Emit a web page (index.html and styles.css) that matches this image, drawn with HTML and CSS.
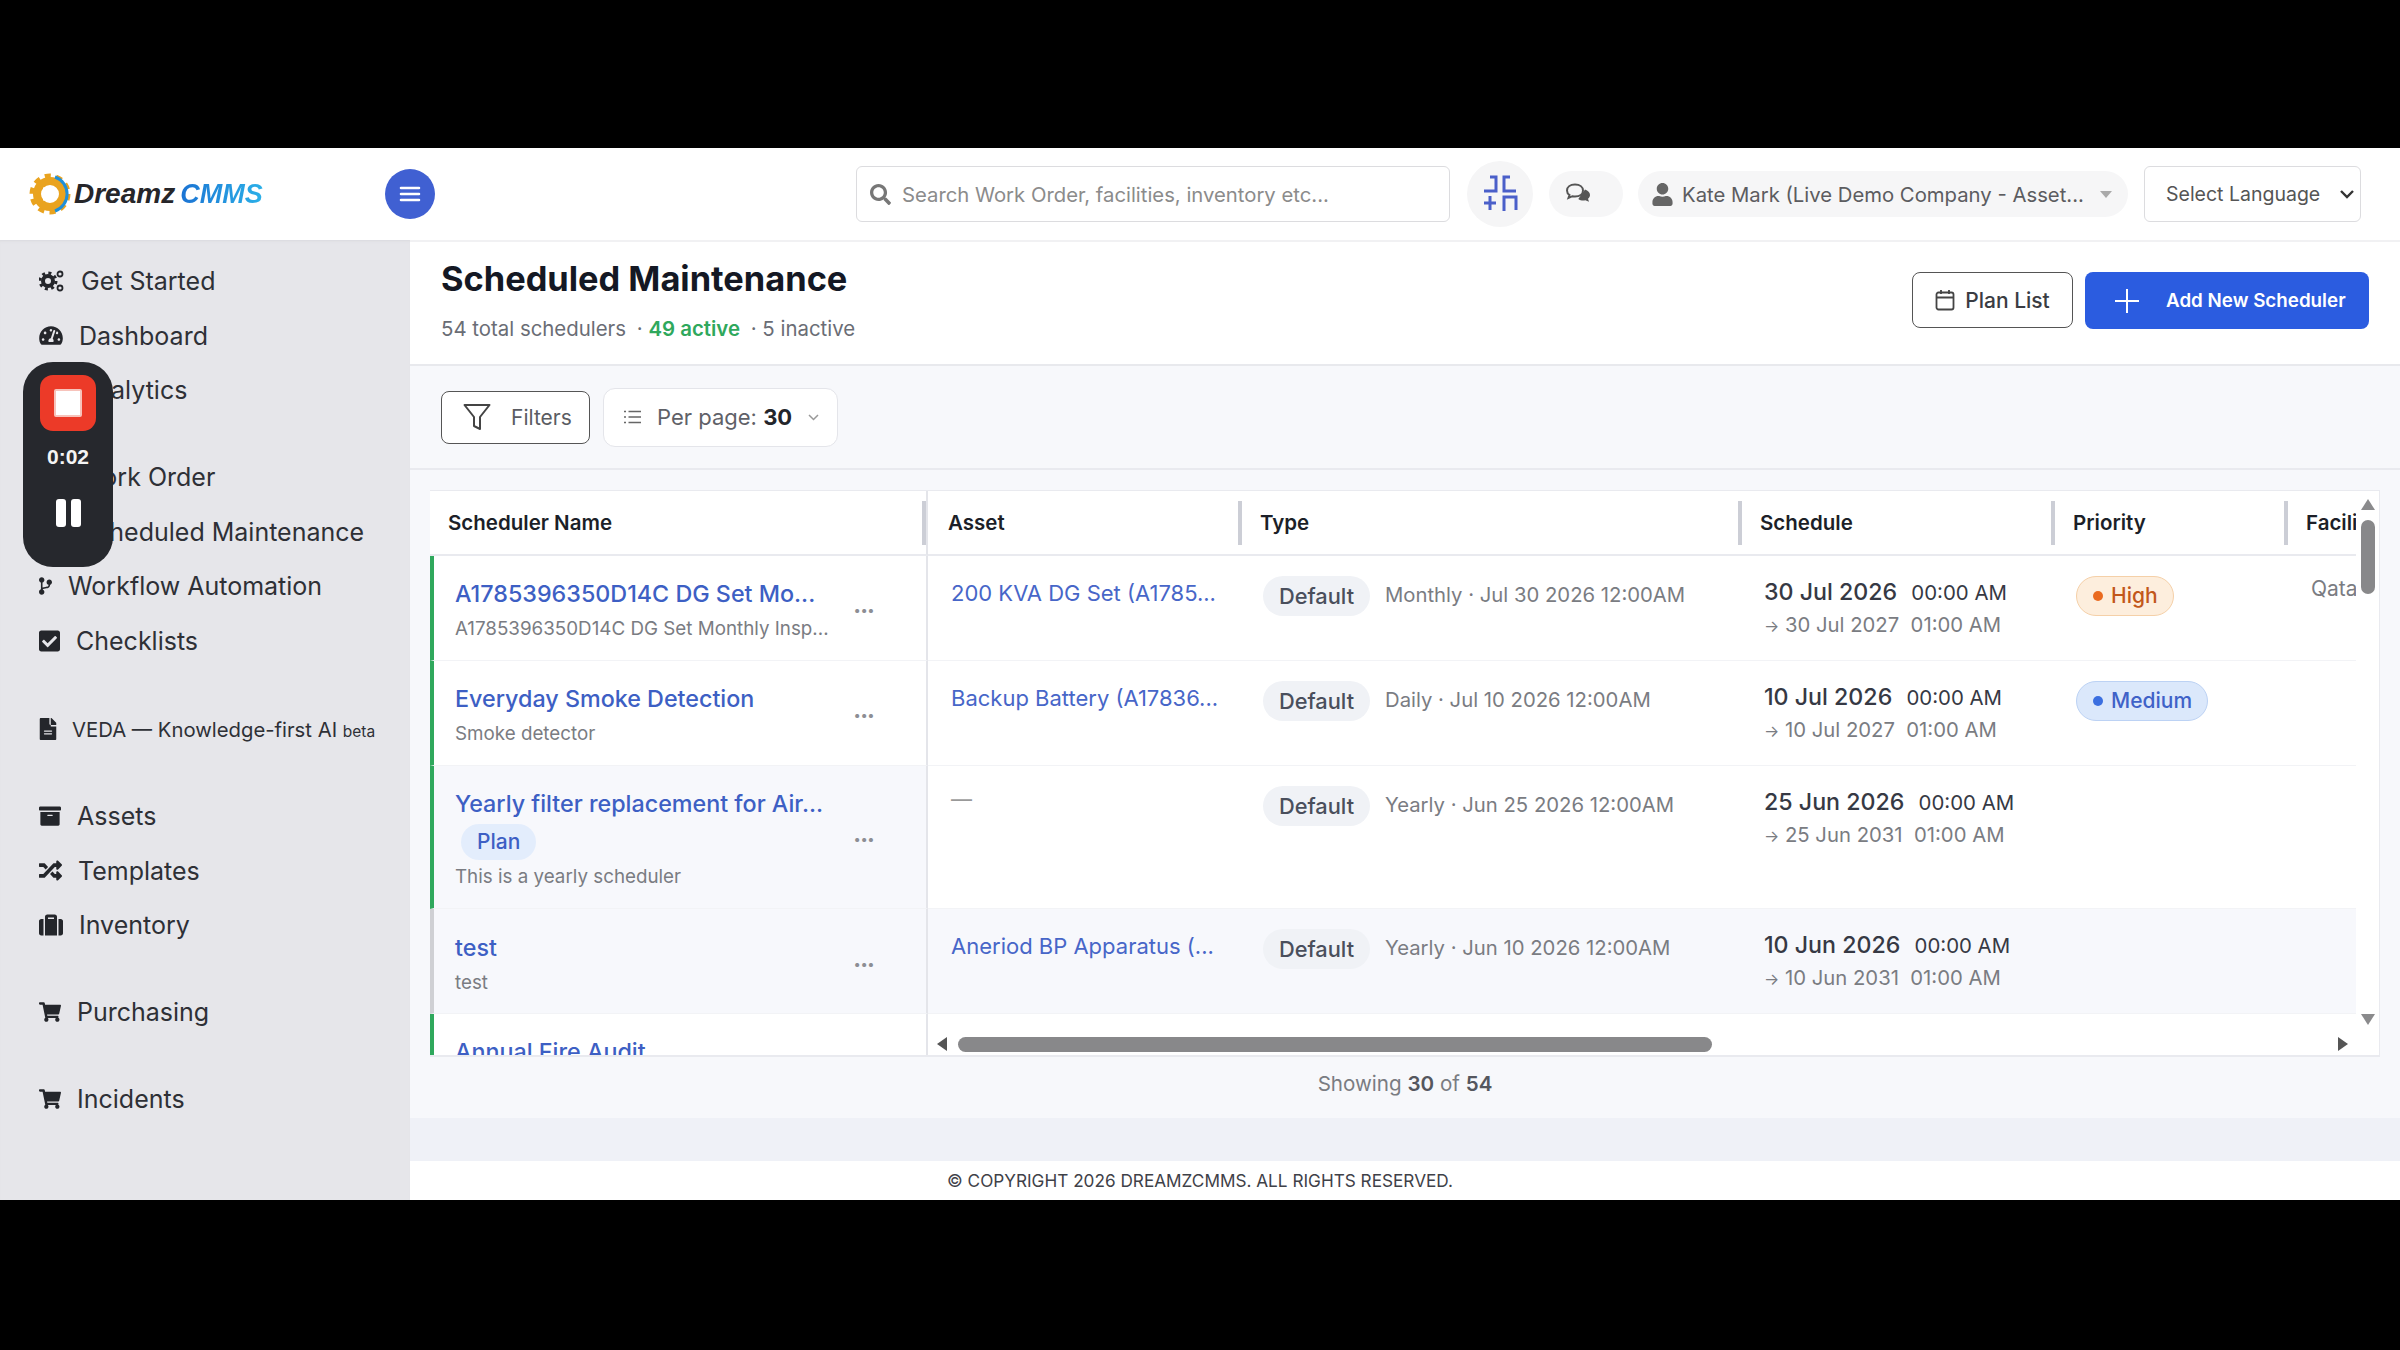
FILE: index.html
```html
<!DOCTYPE html>
<html lang="en">
<head>
    <meta charset="UTF-8">
    <meta name="viewport" content="width=device-width, initial-scale=1.0">
    <title>Scheduled Maintenance - DreamzCMMS</title>
    <link rel="stylesheet" href="styles.css">
</head>
<body>
<div class="app">
    <header class="topbar">
        <a class="logo">
            <svg class="logo-gear" viewBox="0 0 44 44">
                <circle cx="22" cy="22" r="18" fill="none" stroke="#e9a31f" stroke-width="5" stroke-dasharray="6 5.3"/>
                <circle cx="22" cy="22" r="13" fill="none" stroke="#e9a31f" stroke-width="8"/>
                <path d="M27 5 A18 18 0 0 1 27 39" fill="none" stroke="#1f8fd8" stroke-width="3"/>
                <path d="M15 17 H23 A5 5 0 0 1 23 27 H15" fill="none" stroke="#fff" stroke-width="3"/>
            </svg>
            <span class="logo-dark">Dreamz</span>
            <span class="logo-blue">CMMS</span>
        </a>
        <button class="menu-btn">
            <svg viewBox="0 0 24 24" width="24" height="24"><path d="M3 6h18M3 12h18M3 18h18" stroke="#fff" stroke-width="2.6" stroke-linecap="round"/></svg>
        </button>
        <div class="search">
            <svg class="search-icon" viewBox="0 0 512 512"><path d="M505 442.7L405.3 343c-4.5-4.5-10.6-7-17-7H372c27.6-35.3 44-79.7 44-128C416 93.1 322.9 0 208 0S0 93.1 0 208s93.1 208 208 208c48.3 0 92.7-16.4 128-44v16.3c0 6.4 2.5 12.5 7 17l99.7 99.7c9.4 9.4 24.6 9.4 33.9 0l28.3-28.3c9.4-9.4 9.4-24.6.1-34zM208 336c-70.7 0-128-57.2-128-128 0-70.7 57.2-128 128-128 70.7 0 128 57.2 128 128 0 70.7-57.2 128-128 128z"/></svg>
            <input type="text" placeholder="Search Work Order, facilities, inventory etc...">
        </div>
        <button class="compress-btn">
            <svg viewBox="0 0 36 38" width="36" height="38" fill="none" stroke="#4a5fc9" stroke-width="3"><path d="M2 16H14V2H8M34 16H22V2H28M2 28H14M8 21V35M22 36V22H34V35"/></svg>
        </button>
        <button class="chat-btn">
            <svg viewBox="0 0 28 20" width="28" height="20" fill="none" stroke="#555" stroke-width="2"><path d="M10 1.5C5 1.5 2 4 2 7.5c0 2 1 3.5 2.5 4.5L3.5 15l4-1.8c1 .2 1.700.3 2.500.3 5 0 8-2.500 8-6S15 1.500 10 1.500z"/><path d="M20 6.500c3 1 5 3 5 5.500 0 1.500-.7 2.800-2 3.800l1 3-3.700-1.500c-2.300.5-5 .2-7-1.300" fill="#555" stroke="none"/></svg>
        </button>
        <div class="user-pill">
            <svg class="user-icon" viewBox="0 0 448 512"><path d="M224 256c70.700 0 128-57.300 128-128S294.700 0 224 0 96 57.300 96 128s57.300 128 128 128zm89.600 32h-16.700c-22.200 10.200-46.900 16-72.900 16s-50.600-5.800-72.900-16h-16.700C60.200 288 0 348.200 0 422.400V464c0 26.500 21.500 48 48 48h352c26.500 0 48-21.500 48-48v-41.600c0-74.200-60.200-134.400-134.400-134.400z"/></svg>
            <span>Kate Mark (Live Demo Company - Asset...</span>
            <i class="caret"></i>
        </div>
        <div class="lang">
            <span>Select Language</span>
            <svg width="14" height="9" viewBox="0 0 14 9" fill="none" stroke="#333" stroke-width="2.4"><path d="M1 1l6 6 6-6"/></svg>
        </div>
    </header>

    <div class="layout">
        <nav class="sidebar">
            <div class="nav-group">
                <a class="nav-item">
                    <svg width="26" height="24" viewBox="0 0 26 24" fill="none" stroke="#24262b"><circle cx="9" cy="12" r="5" stroke-width="4"/><circle cx="9" cy="12" r="8" stroke-width="3" stroke-dasharray="3 3.300"/><circle cx="21" cy="5" r="2.500" stroke-width="1.800"/><circle cx="21" cy="19" r="2.500" stroke-width="1.800"/></svg>
                    Get Started
                </a>
                <a class="nav-item">
                    <svg width="24" height="21" viewBox="0 0 576 512" fill="#24262b"><path d="M288 32C128.940 32 0 160.940 0 320c0 52.800 14.250 102.260 39.060 144.800 5.610 9.620 16.300 15.200 27.440 15.200h443c11.140 0 21.830-5.580 27.440-15.200C561.750 422.260 576 372.800 576 320c0-159.060-128.940-288-288-288zm0 64c14.710 0 26.580 10.130 30.320 23.650-1.110 2.260-2.640 4.230-3.450 6.670l-9.220 27.670c-5.130 3.490-10.970 6.010-17.640 6.010-17.670 0-32-14.330-32-32S270.330 96 288 96zM96 384c-17.670 0-32-14.330-32-32s14.330-32 32-32 32 14.330 32 32-14.330 32-32 32zm48-160c-17.670 0-32-14.330-32-32s14.330-32 32-32 32 14.330 32 32-14.330 32-32 32zm246.770-72.410l-61.330 184C343.130 347.330 352 364.540 352 384c0 11.720-3.380 22.550-8.880 32H232.880c-5.500-9.450-8.880-20.280-8.880-32 0-33.940 26.500-61.430 59.900-63.590l61.340-184.010c4.170-12.560 17.730-19.450 30.360-15.170 12.570 4.190 19.350 17.790 15.170 30.360zm14.660 57.200l15.520-46.550c3.470-1.290 7.130-2.230 11.050-2.230 17.670 0 32 14.330 32 32s-14.330 32-32 32c-11.380-.01-20.890-6.280-26.570-15.220zM480 384c-17.670 0-32-14.330-32-32s14.330-32 32-32 32 14.330 32 32-14.330 32-32 32z"/></svg>
                    Dashboard
                </a>
                <a class="nav-item">
                    <svg width="24" height="21" viewBox="0 0 24 21" fill="#24262b"><path d="M2 12h4v8H2zM10 2h4v18h-4zM18 7h4v13h-4z"/></svg>
                    Analytics
                </a>
            </div>
            <div class="nav-group">
                <a class="nav-item">
                    <svg width="24" height="21" viewBox="0 0 24 21" fill="#24262b"><path d="M3 2h18v17H3z"/></svg>
                    Work Order
                </a>
                <a class="nav-item">
                    <svg width="24" height="21" viewBox="0 0 24 21" fill="#24262b"><path d="M3 2h18v17H3z"/></svg>
                    Scheduled Maintenance
                </a>
                <a class="nav-item">
                    <svg width="13" height="20" viewBox="0 0 384 512" fill="#24262b"><path d="M384 144c0-44.200-35.800-80-80-80s-80 35.800-80 80c0 36.400 24.300 67.100 57.500 76.800-.6 16.100-4.200 28.500-11 36.900-15.400 19.200-49.300 22.400-85.200 25.700-28.200 2.600-57.400 5.400-81.300 16.900v-144c32.500-10.200 56-40.500 56-76.300 0-44.200-35.800-80-80-80S0 35.800 0 80c0 35.800 23.500 66.100 56 76.300v199.300C23.500 365.900 0 396.200 0 432c0 44.200 35.800 80 80 80s80-35.800 80-80c0-34-21.200-63.100-51.200-74.600 3.100-5.200 7.800-9.800 14.900-13.400 16.200-8.200 40.400-10.400 66.100-12.800 42.200-3.900 90-8.400 118.200-43.400 14-17.400 21.100-39.800 21.600-67.900 31.600-10.800 54.400-40.700 54.400-75.900z"/></svg>
                    Workflow Automation
                </a>
                <a class="nav-item">
                    <svg width="21" height="24" viewBox="0 0 448 512" fill="#24262b"><path d="M400 480H48c-26.510 0-48-21.490-48-48V80c0-26.510 21.490-48 48-48h352c26.510 0 48 21.490 48 48v352c0 26.510-21.490 48-48 48zm-204.686-98.059l184-184c6.248-6.248 6.248-16.379 0-22.627l-22.627-22.627c-6.248-6.248-16.379-6.249-22.628 0L184 302.745l-69.059-69.059c-6.248-6.248-16.379-6.248-22.628 0L69.686 256.314c-6.248 6.248-6.248 16.379 0 22.627l104 104c6.249 6.250 16.379 6.250 22.628.001z"/></svg>
                    Checklists
                </a>
            </div>
            <div class="nav-group nav-veda">
                <a class="nav-item nav-small">
                    <svg width="18" height="22" viewBox="0 0 384 512" fill="#24262b"><path d="M224 136V0H24C10.700 0 0 10.700 0 24v464c0 13.300 10.700 24 24 24h336c13.300 0 24-10.700 24-24V160H248c-13.200 0-24-10.800-24-24zm64 236c0 6.600-5.400 12-12 12H108c-6.600 0-12-5.400-12-12v-8c0-6.600 5.400-12 12-12h168c6.600 0 12 5.400 12 12v8zm0-64c0 6.600-5.400 12-12 12H108c-6.600 0-12-5.400-12-12v-8c0-6.600 5.400-12 12-12h168c6.600 0 12 5.400 12 12v8zm96-114.100v6.100H256V0h6.100c6.400 0 12.500 2.500 17 7l97.900 98c4.500 4.500 7 10.600 7 16.900z"/></svg>
                    <span>VEDA — Knowledge-first AI <small class="beta">beta</small></span>
                </a>
            </div>
            <div class="nav-group">
                <a class="nav-item">
                    <svg width="22" height="22" viewBox="0 0 512 512" fill="#24262b"><path d="M32 448c0 17.700 14.300 32 32 32h384c17.700 0 32-14.300 32-32V160H32v288zm160-212c0-6.600 5.400-12 12-12h104c6.600 0 12 5.400 12 12v8c0 6.600-5.400 12-12 12H204c-6.600 0-12-5.400-12-12v-8zM480 32H32C14.300 32 0 46.300 0 64v48c0 8.800 7.200 16 16 16h480c8.800 0 16-7.200 16-16V64c0-17.700-14.300-32-32-32z"/></svg>
                    Assets
                </a>
                <a class="nav-item">
                    <svg width="23" height="23" viewBox="0 0 512 512" fill="#24262b"><path d="M504.971 359.029c9.373 9.373 9.373 24.569 0 33.941l-80 79.984c-15.010 15.010-40.971 4.490-40.971-16.971V416h-58.785a12.004 12.004 0 0 1-8.773-3.812l-70.556-75.596 53.333-57.143L352 336h32v-39.981c0-21.438 25.943-31.998 40.971-16.971l80 79.981zM12 176h84l52.781 56.551 53.333-57.143-70.556-75.596A11.999 11.999 0 0 0 122.785 96H12c-6.627 0-12 5.373-12 12v56c0 6.627 5.373 12 12 12zm372 0v39.984c0 21.460 25.961 31.980 40.971 16.971l80-79.984c9.373-9.373 9.373-24.569 0-33.941l-80-79.981C409.943 24.021 384 34.582 384 56.019V96h-58.785a12.004 12.004 0 0 0-8.773 3.812L96 336H12c-6.627 0-12 5.373-12 12v56c0 6.627 5.373 12 12 12h110.785c3.326 0 6.503-1.381 8.773-3.812L352 176h32z"/></svg>
                    Templates
                </a>
                <a class="nav-item">
                    <svg width="24" height="24" viewBox="0 0 512 512" fill="#24262b"><path d="M128 480h256V80c0-26.500-21.500-48-48-48H176c-26.500 0-48 21.500-48 48v400zm64-384h128v32H192V96zm320 80v256c0 26.500-21.500 48-48 48h-48V128h48c26.500 0 48 21.500 48 48zM96 480H48c-26.500 0-48-21.500-48-48V176c0-26.500 21.500-48 48-48h48v352z"/></svg>
                    Inventory
                </a>
            </div>
            <div class="nav-group">
                <a class="nav-item">
                    <svg width="22" height="20" viewBox="0 0 576 512" fill="#24262b"><path d="M528.120 301.319l47.273-208C578.806 78.301 567.391 64 551.990 64H159.208l-9.166-44.810C147.758 8.021 137.930 0 126.529 0H24C10.745 0 0 10.745 0 24v16c0 13.255 10.745 24 24 24h69.883l70.248 343.435C147.325 417.100 136 435.222 136 456c0 30.928 25.072 56 56 56s56-25.072 56-56c0-15.674-6.447-29.835-16.824-40h209.647C430.447 426.165 424 440.326 424 456c0 30.928 25.072 56 56 56s56-25.072 56-56c0-22.172-12.888-41.332-31.579-50.405l5.517-24.276c3.413-15.018-8.002-29.319-23.403-29.319H218.117l-6.545-32h293.145c11.206 0 20.920-7.754 23.403-18.681z"/></svg>
                    Purchasing
                </a>
            </div>
            <div class="nav-group">
                <a class="nav-item">
                    <svg width="22" height="20" viewBox="0 0 576 512" fill="#24262b"><path d="M528.120 301.319l47.273-208C578.806 78.301 567.391 64 551.990 64H159.208l-9.166-44.810C147.758 8.021 137.930 0 126.529 0H24C10.745 0 0 10.745 0 24v16c0 13.255 10.745 24 24 24h69.883l70.248 343.435C147.325 417.100 136 435.222 136 456c0 30.928 25.072 56 56 56s56-25.072 56-56c0-15.674-6.447-29.835-16.824-40h209.647C430.447 426.165 424 440.326 424 456c0 30.928 25.072 56 56 56s56-25.072 56-56c0-22.172-12.888-41.332-31.579-50.405l5.517-24.276c3.413-15.018-8.002-29.319-23.403-29.319H218.117l-6.545-32h293.145c11.206 0 20.920-7.754 23.403-18.681z"/></svg>
                    Incidents
                </a>
            </div>
        </nav>

        <main class="main">
            <section class="page-head">
                <div>
                    <h1>Scheduled Maintenance</h1>
                    <p class="summary">54 total schedulers <span class="sep">·</span> <b>49 active</b> <span class="sep">·</span> 5 inactive</p>
                </div>
                <div class="head-actions">
                    <button class="btn-outline">
                        <svg width="20" height="22" viewBox="0 0 20 22" fill="none" stroke="#444" stroke-width="1.800"><rect x="1.500" y="3.500" width="17" height="17" rx="2"/><path d="M1.500 8.500h17M6 1v4M14 1v4"/></svg>
                        Plan List
                    </button>
                    <button class="btn-primary">
                        <svg width="26" height="26" viewBox="0 0 26 26" stroke="#fff" stroke-width="2"><path d="M13 1v24M1 13h24"/></svg>
                        Add New Scheduler
                    </button>
                </div>
            </section>

            <section class="toolbar">
                <button class="btn-filter">
                    <svg width="28" height="28" viewBox="0 0 28 28" fill="none" stroke="#444" stroke-width="2" stroke-linejoin="round"><path d="M1.500 2h25L17 14v12l-6-3v-9z"/></svg>
                    Filters
                </button>
                <div class="per-page">
                    <svg width="17" height="14" viewBox="0 0 17 14" stroke="#666" stroke-width="1.600"><path d="M4.500 1.500H17M4.500 7H17M4.500 12.500H17M0 1.500h2M0 7h2M0 12.500h2"/></svg>
                    <span>Per page: <b>30</b></span>
                    <svg width="11" height="7" viewBox="0 0 11 7" fill="none" stroke="#999" stroke-width="1.500"><path d="M1 1l4.500 4.500L10 1"/></svg>
                </div>
            </section>

            <section class="content">
                <div class="card">
                    <table class="sched-table">
                        <colgroup>
                            <col class="col-name"><col class="col-asset"><col class="col-type">
                            <col class="col-schedule"><col class="col-priority"><col class="col-facility">
                        </colgroup>
                        <thead>
                            <tr>
                                <th>Scheduler Name</th>
                                <th>Asset</th>
                                <th>Type</th>
                                <th>Schedule</th>
                                <th>Priority</th>
                                <th>Facili</th>
                            </tr>
                        </thead>
                        <tbody>
                            <tr>
                                <td class="name-cell">
                                    <div class="name-wrap">
                                        <div>
                                            <a class="sched-title">A1785396350D14C DG Set Mo...</a>
                                            <div class="sched-sub">A1785396350D14C DG Set Monthly Insp...</div>
                                        </div>
                                        <span class="dots">•••</span>
                                    </div>
                                </td>
                                <td class="asset-cell"><a class="asset-link">200 KVA DG Set (A1785...</a></td>
                                <td class="type-cell"><div class="type-wrap"><span class="pill-default">Default</span><span class="freq">Monthly · Jul 30 2026 12:00AM</span></div></td>
                                <td class="date-cell"><div class="date-main">30 Jul 2026 <span>00:00 AM</span></div><div class="date-end"><small>→</small> 30 Jul 2027&nbsp; 01:00 AM</div></td>
                                <td class="prio-cell"><span class="prio prio-high"><i></i>High</span></td>
                                <td class="facility">Qatar</td>
                            </tr>
                            <tr>
                                <td class="name-cell">
                                    <div class="name-wrap">
                                        <div>
                                            <a class="sched-title">Everyday Smoke Detection</a>
                                            <div class="sched-sub">Smoke detector</div>
                                        </div>
                                        <span class="dots">•••</span>
                                    </div>
                                </td>
                                <td class="asset-cell"><a class="asset-link">Backup Battery (A17836...</a></td>
                                <td class="type-cell"><div class="type-wrap"><span class="pill-default">Default</span><span class="freq">Daily · Jul 10 2026 12:00AM</span></div></td>
                                <td class="date-cell"><div class="date-main">10 Jul 2026 <span>00:00 AM</span></div><div class="date-end"><small>→</small> 10 Jul 2027&nbsp; 01:00 AM</div></td>
                                <td class="prio-cell"><span class="prio prio-medium"><i></i>Medium</span></td>
                                <td></td>
                            </tr>
                            <tr class="row-tall">
                                <td class="name-cell row-hover">
                                    <div class="name-wrap">
                                        <div>
                                            <a class="sched-title">Yearly filter replacement for Air...</a>
                                            <span class="pill-plan">Plan</span>
                                            <div class="sched-sub">This is a yearly scheduler</div>
                                        </div>
                                        <span class="dots">•••</span>
                                    </div>
                                </td>
                                <td class="asset-cell"><span class="dash">—</span></td>
                                <td class="type-cell"><div class="type-wrap"><span class="pill-default">Default</span><span class="freq">Yearly · Jun 25 2026 12:00AM</span></div></td>
                                <td class="date-cell"><div class="date-main">25 Jun 2026 <span>00:00 AM</span></div><div class="date-end"><small>→</small> 25 Jun 2031&nbsp; 01:00 AM</div></td>
                                <td></td>
                                <td></td>
                            </tr>
                            <tr class="row-hover">
                                <td class="name-cell inactive">
                                    <div class="name-wrap">
                                        <div>
                                            <a class="sched-title">test</a>
                                            <div class="sched-sub">test</div>
                                        </div>
                                        <span class="dots">•••</span>
                                    </div>
                                </td>
                                <td class="asset-cell"><a class="asset-link">Aneriod BP Apparatus (...</a></td>
                                <td class="type-cell"><div class="type-wrap"><span class="pill-default">Default</span><span class="freq">Yearly · Jun 10 2026 12:00AM</span></div></td>
                                <td class="date-cell"><div class="date-main">10 Jun 2026 <span>00:00 AM</span></div><div class="date-end"><small>→</small> 10 Jun 2031&nbsp; 01:00 AM</div></td>
                                <td></td>
                                <td></td>
                            </tr>
                            <tr>
                                <td class="name-cell last-name">
                                    <a class="sched-title">Annual Fire Audit</a>
                                </td>
                                <td colspan="5"></td>
                            </tr>
                        </tbody>
                    </table>

                    <!-- native looking scrollbars, sit on top of the table -->
                    <div class="vbar">
                        <i class="arrow-up"></i>
                        <i class="vthumb"></i>
                        <i class="arrow-down"></i>
                    </div>
                    <div class="hbar">
                        <i class="arrow-left"></i>
                        <i class="hthumb"></i>
                        <i class="arrow-right"></i>
                    </div>
                </div>
                <div class="showing">Showing <b>30</b> of <b>54</b></div>
            </section>
            <div class="band"></div>
            <footer class="footer">© COPYRIGHT 2026 DREAMZCMMS. ALL RIGHTS RESERVED.</footer>
        </main>
    </div>

    <div class="recorder">
        <div class="rec-stop"><i></i></div>
        <div class="rec-time">0:02</div>
        <div class="rec-pause"><i></i><i></i></div>
    </div>
</div>
</body>
</html>
```

FILE: styles.css
```css
* {
    box-sizing: border-box;
}
body {
    margin: 0;
    padding: 148px 0 150px;
    background-color: #000;
    font-family: Inter, "Liberation Sans", sans-serif;
    color: #2b2d33;
}
button {
    font-family: inherit;
    cursor: pointer;
}
.app {
    position: relative;
    height: 1052px;
    display: flex;
    flex-direction: column;
    background-color: #fff;
    overflow: hidden;
}

/* top bar */
.topbar {
    height: 92px;
    flex: none;
    display: flex;
    align-items: center;
    padding-left: 28px;
    background-color: #fff;
}
.logo {
    width: 357px;
    display: flex;
    align-items: center;
    font-family: "Liberation Sans", sans-serif;
    font-size: 28px;
    font-weight: 700;
    font-style: italic;
}
.logo-gear {
    width: 44px;
    height: 44px;
    margin-right: 2px;
}
.logo-dark {
    color: #26262a;
    margin-right: 5px;
}
.logo-blue {
    font-size: 27px;
    background: linear-gradient(90deg, #1b73d3, #2bb0e8);
    -webkit-background-clip: text;
    background-clip: text;
    color: transparent;
}
.menu-btn {
    width: 50px;
    height: 50px;
    flex: none;
    border: none;
    padding: 0;
    border-radius: 50%;
    background-color: #4060d2;
    display: flex;
    align-items: center;
    justify-content: center;
}
.search {
    width: 594px;
    height: 56px;
    margin-left: 421px;
    flex: none;
    display: flex;
    align-items: center;
    gap: 11px;
    padding-left: 13px;
    border: 1.5px solid #dcdcdf;
    border-radius: 6px;
}
.search-icon {
    width: 21px;
    height: 21px;
    fill: #777;
    flex: none;
}
.search input {
    flex: 1;
    border: none;
    outline: none;
    padding: 0;
    font-family: inherit;
    font-size: 20.3px;
    color: #444;
}
.search input::placeholder {
    color: #8b8b8b;
}
.compress-btn {
    width: 66px;
    height: 66px;
    margin-left: 17px;
    flex: none;
    padding: 0;
    border: none;
    border-radius: 50%;
    background-color: #f5f5f6;
    display: flex;
    align-items: center;
    justify-content: center;
}
.chat-btn {
    width: 74px;
    height: 46px;
    margin-left: 16px;
    flex: none;
    padding: 0 14px 0 0;
    border: none;
    border-radius: 23px;
    background-color: #f6f6f7;
}
.user-pill {
    width: 490px;
    height: 46px;
    margin-left: 15px;
    flex: none;
    display: flex;
    align-items: center;
    gap: 9px;
    padding-left: 14px;
    border-radius: 23px;
    background-color: #f6f6f7;
    color: #5c5c60;
    font-size: 20.3px;
    white-space: nowrap;
}
.user-icon {
    width: 21px;
    height: 23px;
    fill: #666;
    flex: none;
}
.caret {
    margin-left: 7px;
    border-left: 6px solid transparent;
    border-right: 6px solid transparent;
    border-top: 7px solid #aaa;
}
.lang {
    width: 217px;
    height: 56px;
    margin-left: 16px;
    flex: none;
    display: flex;
    align-items: center;
    justify-content: space-between;
    padding: 0 6px 0 21px;
    border: 1.5px solid #dcdcdf;
    border-radius: 6px;
    background-color: #fff;
    font-size: 19.5px;
    color: #555;
}

.layout {
    flex: 1;
    display: flex;
    min-height: 0;
}

/* sidebar */
.sidebar {
    width: 410px;
    flex: none;
    padding-top: 14px;
    background-color: #e6e6ea;
    box-shadow: inset 0 3px 3px -2px #d9d9dd;
}
.nav-group {
    margin-bottom: 32.5px;
}
.nav-veda {
    margin-top: 34px;
}
.nav-item {
    height: 54.5px;
    display: flex;
    align-items: center;
    gap: 16px;
    padding-left: 39px;
    font-size: 25px;
    color: #2e3036;
    white-space: nowrap;
}
.nav-item svg {
    flex: none;
}
.nav-small {
    font-size: 20.3px;
    gap: 15px;
}
.beta {
    font-size: 15.5px;
}

/* main */
.main {
    flex: 1;
    min-width: 0;
    display: flex;
    flex-direction: column;
    background-color: #f7f8fb;
}
.page-head {
    height: 126px;
    flex: none;
    display: flex;
    justify-content: space-between;
    padding: 17px 31px 0;
    background-color: #fff;
    border-top: 2px solid #f1f1f3;
    border-bottom: 2px solid #e8e9ed;
}
h1 {
    margin: 0;
    font-size: 34.4px;
    line-height: 40px;
    font-weight: 700;
    color: #141824;
}
.summary {
    margin: 17px 0 0;
    font-size: 20.4px;
    line-height: 26px;
    color: #6a6d75;
}
.summary b {
    font-weight: 600;
    color: #2fa85c;
}
.sep {
    margin-left: 5px;
}
.head-actions {
    display: flex;
    gap: 12px;
    margin-top: 13px;
}
.btn-outline {
    width: 161px;
    height: 56px;
    display: flex;
    align-items: center;
    justify-content: center;
    gap: 10px;
    background-color: #fff;
    border: 1.5px solid #555;
    border-radius: 8px;
    font-size: 21px;
    font-weight: 500;
    color: #3a3c42;
}
.btn-primary {
    width: 284px;
    height: 57px;
    display: flex;
    align-items: center;
    gap: 26px;
    padding-left: 29px;
    border: none;
    border-radius: 8px;
    background-color: #2b5ce0;
    font-size: 18.8px;
    font-weight: 600;
    color: #fff;
}
.toolbar {
    height: 104px;
    flex: none;
    display: flex;
    align-items: center;
    gap: 13px;
    padding-left: 31px;
    border-bottom: 2px solid #e9eaef;
}
.btn-filter {
    width: 149px;
    height: 53px;
    display: flex;
    align-items: center;
    gap: 20px;
    padding-left: 21px;
    background-color: #fff;
    border: 1.5px solid #555;
    border-radius: 8px;
    font-size: 21px;
    color: #5a5c62;
}
.per-page {
    width: 235px;
    height: 59px;
    display: flex;
    align-items: center;
    gap: 16px;
    padding-left: 20px;
    background-color: #fff;
    border: 1.5px solid #e4e5ea;
    border-radius: 12px;
    font-size: 22px;
    color: #5f6168;
}
.per-page b {
    font-weight: 700;
    color: #23252b;
}
.content {
    flex: none;
    padding: 20px 20px 0;
}

/* table card */
.card {
    position: relative;
    height: 567px;
    overflow: hidden;
    background-color: #fff;
    border-top: 1.5px solid #e9eaef;
    border-right: 1.5px solid #e9eaef;
    border-bottom: 2px solid #e9eaef;
}
.sched-table {
    width: 1926px;
    table-layout: fixed;
    border-collapse: separate;
    border-spacing: 0;
}
.col-name { width: 498px; }
.col-asset { width: 310px; }
.col-type { width: 500px; }
.col-schedule { width: 313px; }
.col-priority { width: 233px; }
.col-facility { width: 72px; }
th {
    height: 65px;
    padding: 0 0 0 22px;
    text-align: left;
    font-size: 20.5px;
    font-weight: 600;
    color: #1c1f28;
    border-bottom: 2px solid #e9eaef;
    white-space: nowrap;
    overflow: hidden;
    background: linear-gradient(#ccced6, #ccced6) no-repeat left 10px / 4px 44px;
}
th:first-child {
    padding-left: 18px;
    background: linear-gradient(#ccced6, #ccced6) no-repeat right 0 top 10px / 4px 44px;
    border-right: 2px solid #e4e5ea;
}
th:nth-child(2) {
    padding-left: 20px;
    background: none;
}
td {
    height: 105px;
    padding: 19.5px 0 0 21px;
    vertical-align: top;
    border-bottom: 1px solid #f2f3f6;
    font-size: 21px;
}
.row-tall td {
    height: 143px;
}
.row-hover td,
td.row-hover {
    background-color: #f7f8fc;
}
.name-cell {
    padding: 0;
    vertical-align: middle;
    border-left: 4px solid #2fa85c;
    border-right: 2px solid #e4e5ea;
}
.name-cell.inactive {
    border-left-color: #cfd0d4;
}
.name-cell.last-name {
    padding: 20px 0 0 21px;
    vertical-align: top;
}
.name-wrap {
    display: flex;
    align-items: center;
    justify-content: space-between;
    padding: 4px 52px 0 21px;
}
.inactive .name-wrap {
    padding-top: 6px;
}
.sched-title {
    display: block;
    font-size: 23.3px;
    line-height: 36px;
    font-weight: 500;
    color: #3d5fc4;
    white-space: nowrap;
}
.sched-sub {
    margin-top: 1px;
    font-size: 18.8px;
    line-height: 32px;
    color: #7a7c82;
    white-space: nowrap;
}
.pill-plan {
    display: inline-block;
    margin: 2px 0 0 6px;
    padding: 0 16px;
    height: 36px;
    line-height: 36px;
    border-radius: 18px;
    background-color: #e3edfc;
    font-size: 21px;
    font-weight: 500;
    color: #3d5fc4;
}
.dots {
    font-size: 13px;
    line-height: 10px;
    letter-spacing: -0.5px;
    color: #8c8e94;
}
.asset-cell {
    padding-left: 23px;
}
.asset-link {
    display: block;
    margin-top: 1px;
    font-size: 22px;
    line-height: 32px;
    color: #4766c8;
    white-space: nowrap;
}
.dash {
    display: block;
    margin-top: -2px;
    color: #999;
    line-height: 32px;
}
.type-cell {
    padding-left: 25px;
}
.type-wrap {
    display: flex;
    align-items: center;
    gap: 15px;
}
.pill-default {
    width: 107px;
    height: 40px;
    line-height: 40px;
    text-align: center;
    border-radius: 20px;
    background-color: #f0f2f6;
    font-size: 21.8px;
    font-weight: 500;
    color: #4a4f5c;
}
.freq {
    margin-bottom: 2px;
    font-size: 20.3px;
    color: #7a7c82;
    white-space: nowrap;
}
.date-cell {
    padding-left: 26px;
}
.date-main {
    margin-top: -2px;
    font-size: 23.2px;
    line-height: 36px;
    font-weight: 500;
    color: #363944;
    white-space: nowrap;
}
.date-main span {
    margin-left: 8px;
    font-size: 20.4px;
    font-weight: 400;
}
.date-end {
    font-size: 20.3px;
    line-height: 27px;
    color: #7a7c82;
    white-space: nowrap;
}
.date-end small {
    font-size: 16px;
}
.prio-cell {
    padding-left: 25px;
}
.prio {
    display: inline-flex;
    align-items: center;
    gap: 8px;
    height: 40px;
    padding: 0 15px 0 16px;
    border-radius: 20px;
    font-size: 21px;
    font-weight: 500;
}
.prio i {
    width: 10px;
    height: 10px;
    border-radius: 50%;
}
.prio-high {
    background-color: #fdeedd;
    border: 1.5px solid #f5d0a8;
    color: #c2571a;
}
.prio-high i {
    background-color: #ea6a1f;
}
.prio-medium {
    background-color: #dbe8fb;
    border: 1.5px solid #bcd2f4;
    color: #3f62c8;
}
.prio-medium i {
    background-color: #3b6fe0;
}
.facility {
    padding-left: 27px;
    overflow: hidden;
    color: #7a7c82;
    white-space: nowrap;
    line-height: 26px;
}

/* scrollbars */
.vbar {
    position: absolute;
    top: 0;
    right: 4px;
    bottom: 29px;
    width: 14px;
}
.vbar i,
.hbar i {
    position: absolute;
    display: block;
}
.arrow-up {
    top: 8px;
    border-left: 7px solid transparent;
    border-right: 7px solid transparent;
    border-bottom: 11px solid #8a8a8c;
}
.vthumb {
    top: 29px;
    left: 0;
    width: 14px;
    height: 74px;
    border-radius: 7px;
    background-color: #88888a;
}
.arrow-down {
    bottom: 1px;
    border-left: 7px solid transparent;
    border-right: 7px solid transparent;
    border-top: 11px solid #8a8a8c;
}
.hbar {
    position: absolute;
    left: 498px;
    right: 0;
    bottom: 0;
    height: 28px;
    background-color: #fff;
}
.arrow-left {
    left: 9px;
    top: 10px;
    border-top: 7px solid transparent;
    border-bottom: 7px solid transparent;
    border-right: 10px solid #555;
}
.hthumb {
    left: 30px;
    top: 10px;
    width: 754px;
    height: 15px;
    border-radius: 8px;
    background-color: #88888a;
}
.arrow-right {
    left: 1410px;
    top: 10px;
    border-top: 7px solid transparent;
    border-bottom: 7px solid transparent;
    border-left: 10px solid #555;
}
.showing {
    height: 61px;
    padding-top: 14px;
    text-align: center;
    font-size: 20.6px;
    line-height: 26px;
    color: #7a7c82;
}
.showing b {
    font-weight: 600;
    color: #55575e;
}
.band {
    flex: 1;
    background-color: #eff1f7;
}
.footer {
    height: 39px;
    flex: none;
    padding-right: 410px;
    text-align: center;
    background-color: #fff;
    font-size: 17.2px;
    line-height: 39px;
    color: #3f4148;
}

/* screen recorder widget, floats over the page */
.recorder {
    position: absolute;
    left: 23px;
    top: 214px;
    width: 90px;
    height: 205px;
    padding-top: 13px;
    border-radius: 30px;
    background-color: #26282d;
    display: flex;
    flex-direction: column;
    align-items: center;
}
.rec-stop {
    width: 56px;
    height: 56px;
    border-radius: 13px;
    background-color: #ec3a28;
    display: flex;
    align-items: center;
    justify-content: center;
}
.rec-stop i {
    width: 28px;
    height: 28px;
    background-color: #fff;
    border: 2px solid #f7c3bb;
    border-radius: 2px;
}
.rec-time {
    margin-top: 14px;
    font-family: "Liberation Sans", sans-serif;
    font-size: 21px;
    line-height: 24px;
    font-weight: 700;
    color: #f4f4f4;
}
.rec-pause {
    margin-top: 30px;
    display: flex;
    gap: 5px;
}
.rec-pause i {
    width: 10px;
    height: 28px;
    border-radius: 3px;
    background-color: #fff;
}
```
